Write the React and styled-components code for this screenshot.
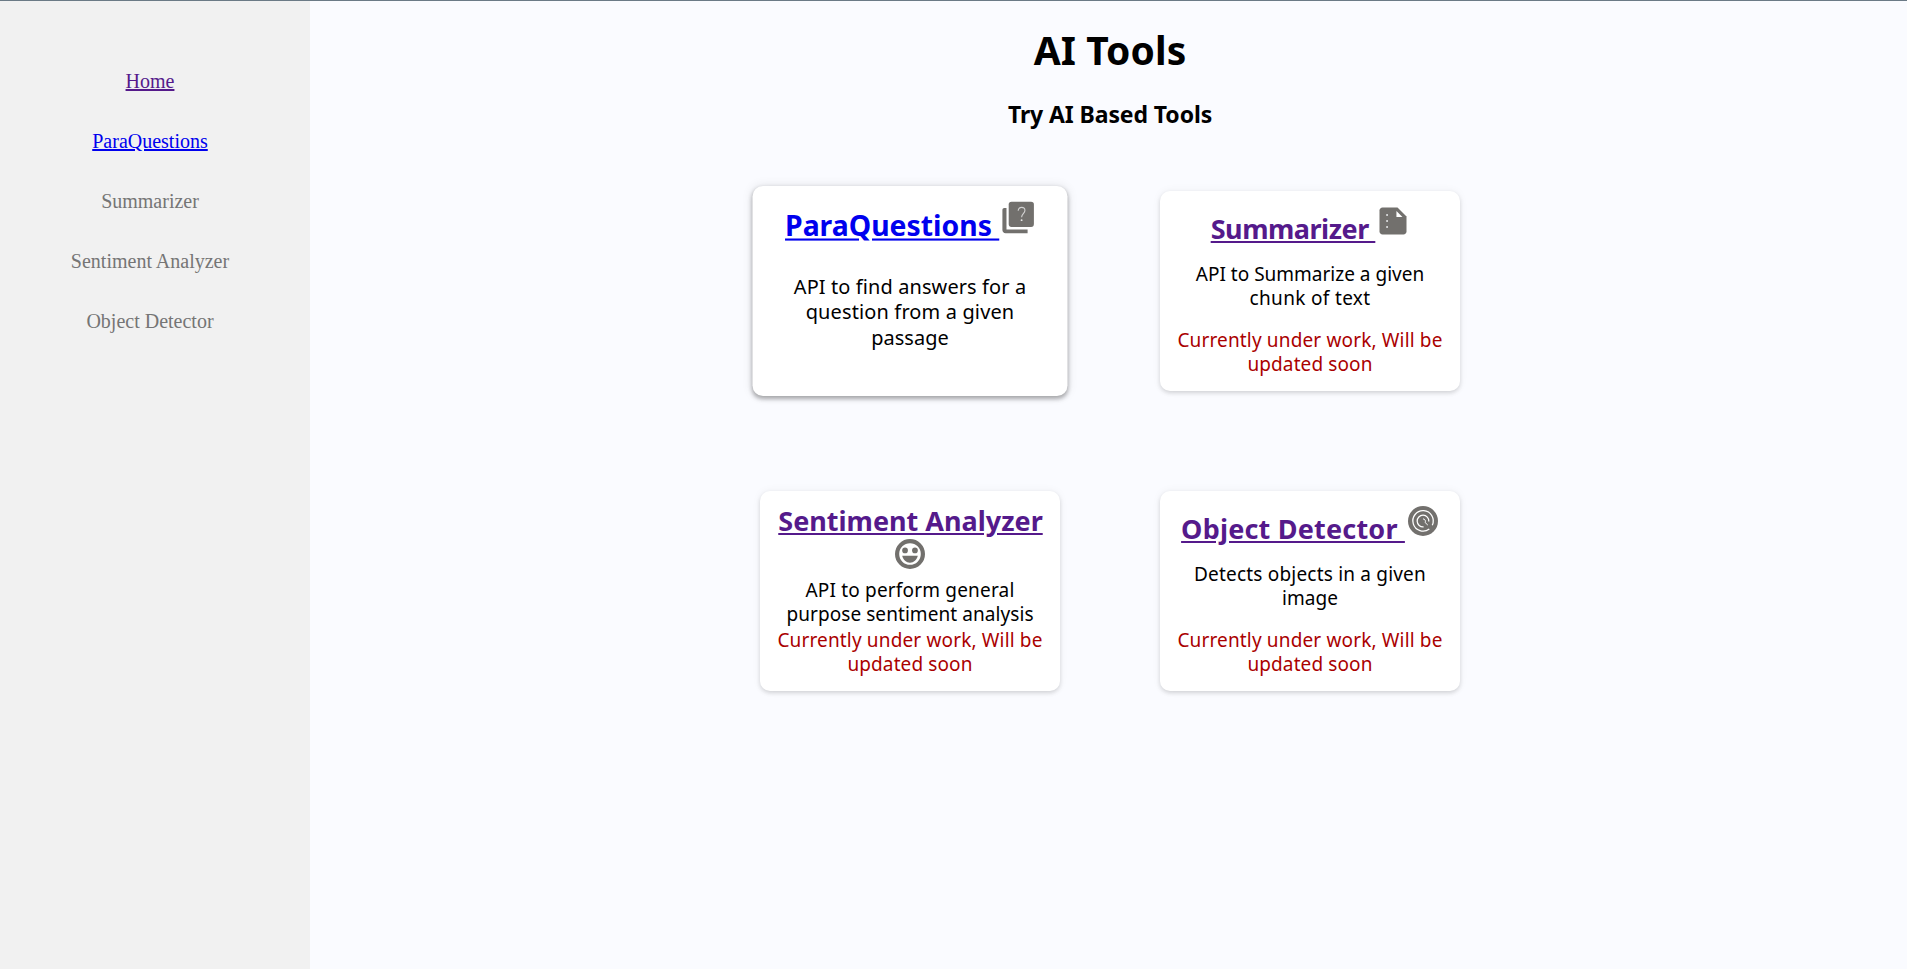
import React from "react";
import styled, { createGlobalStyle } from "styled-components";

const GlobalStyle = createGlobalStyle`
  * {
    box-sizing: border-box;
  }

  body {
    margin: 0;
    background: #fafbff;
    overflow: hidden;
  }
`;

const Page = styled.div`
  display: flex;
  height: 100vh;
  border-top: 1px solid #6b7a86;
`;

const Sidebar = styled.nav`
  flex: none;
  width: 310px;
  padding: 50px 10px 0 0;
  background: #f1f1f1;
  display: flex;
  flex-direction: column;
  align-items: center;
  font-family: "Liberation Serif", "Times New Roman", serif;
  font-size: 20px;
`;

const NavItem = styled.div`
  height: 60px;
  line-height: 60px;
  color: #757575;
`;

const Link = styled.a`
  color: ${({ $visited }) => ($visited ? "#551a8b" : "#0000ee")};
  text-decoration: underline;
  letter-spacing: ${({ $tracking = 0 }) => $tracking}px;
  white-space: pre;
`;

const Main = styled.main`
  flex: 1;
  padding: 26px 0 0 3px;
  display: flex;
  flex-direction: column;
  align-items: center;
  background: #fafbff;
  font-family: "Noto Sans", "Open Sans", sans-serif;
  color: #000;
`;

const Heading = styled.h1`
  margin: 0;
  font-size: 39px;
  line-height: 46px;
  letter-spacing: 0.08px;
`;

const Subheading = styled.h2`
  margin: 27px 0 63px;
  font-size: 23px;
  line-height: 28px;
  letter-spacing: -0.1px;
`;

const CardGrid = styled.section`
  display: grid;
  grid-template-columns: repeat(2, 300px);
  grid-auto-rows: 200px;
  gap: 100px;
`;

const Card = styled.article`
  display: flex;
  flex-direction: column;
  align-items: center;
  padding: 12px 10px 15px;
  border-radius: 10px;
  background: #fff;
  text-align: center;
  transform: ${({ $raised }) => ($raised ? "scale(1.05)" : "none")};
  box-shadow: ${({ $raised }) =>
    $raised
      ? "0 0 10px rgba(0, 0, 0, 0.1), 0 2px 4px rgba(0, 0, 0, 0.3)"
      : "0 0 10px rgba(0, 0, 0, 0.05), 0 2px 4px rgba(0, 0, 0, 0.14)"};
`;

const CardTitle = styled.h3`
  margin: ${({ $stacked }) => ($stacked ? "2px 0 0" : "0")};
  padding-left: ${({ $stacked }) => ($stacked ? "1px" : "2px")};
  font-size: 27px;
  line-height: 32px;
  font-weight: 700;
  text-underline-offset: 2px;
  text-decoration-thickness: 2px;
`;

const Icon = styled.svg`
  display: ${({ $block }) => ($block ? "block" : "inline")};
  width: 36px;
  height: 36px;
  margin: ${({ $block }) => ($block ? "-1px auto 0" : "0")};
  vertical-align: baseline;
  fill: #72706d;
`;

const Description = styled.p`
  margin: ${({ $gap }) => $gap}px 0 0;
  font-size: 19px;
  line-height: 24px;
`;

const Notice = styled.p`
  margin: auto 0 0;
  font-size: 19px;
  line-height: 24px;
  color: #aa0000;
`;

const Line = styled.span`
  display: block;
  white-space: nowrap;
  letter-spacing: ${({ $tracking }) => $tracking}px;
`;

const QuestionsIcon = () => (
  <Icon viewBox="0 0 24 24">
    <path d="M4.6 6H3.2C2.5 6 2 6.500 2 7.200V20c0 1.100.9 2 2 2h14v-2.400H4.600z" />
    <rect x="6" y="2" width="16" height="16" rx="1.8" />
    <path
      d="M12 7.7c.2-1.4 1-2.1 2.2-2.1 1.3 0 2.1.8 2.1 1.9 0 1.900-2.100 2.300-2.100 4.300"
      fill="none"
      stroke="#d2d2d2"
      strokeWidth="0.7"
    />
    <circle cx="14.2" cy="13.7" r="0.6" fill="#e8e8e8" />
  </Icon>
);

const SummaryIcon = () => (
  <Icon viewBox="0 0 24 24">
    <path d="M15 3H5c-1.1 0-2 .9-2 2v14c0 1.1.9 2 2 2h14c1.1 0 2-.9 2-2V9z" />
    <path d="M14.3 5.4v4h4z" fill="#fff" />
    <g fill="#e6e8e9">
      <rect x="7.5" y="7.4" width="1.1" height="1.2" />
      <rect x="7.5" y="11.4" width="1.1" height="1.2" />
      <rect x="7.5" y="15.4" width="1.1" height="1.2" />
    </g>
  </Icon>
);

const SmileIcon = () => (
  <Icon $block viewBox="0 0 24 24">
    <circle cx="12" cy="12" r="8.6" fill="none" stroke="#72706d" strokeWidth="2.8" />
    <circle cx="8.7" cy="9.6" r="1.9" />
    <circle cx="15.3" cy="9.6" r="1.9" />
    <path d="M6.8 13.2h10.4c-.6 2.7-2.7 4.6-5.2 4.6s-4.6-1.9-5.2-4.6z" />
  </Icon>
);

const TargetIcon = () => (
  <Icon viewBox="0 0 24 24">
    <circle cx="12" cy="12" r="10" />
    <g fill="none" stroke="#fff" strokeWidth="0.85">
      <path d="M16.2 17.3A6.8 6.8 0 1 1 18.2 14.8" />
      <path d="M12.4 15.9A3.9 3.9 0 1 1 15.9 12.3" />
      <path d="M12 10.6a1.6 1.6 0 0 1 1.4 2.4l1.8 1.7" strokeWidth="0.65" />
    </g>
  </Icon>
);

const UnderWork = () => (
  <Notice>
    <Line $tracking={0.15}>Currently under work, Will be</Line>
    <Line $tracking={0.113}>updated soon</Line>
  </Notice>
);

export default function App() {
  return (
    <>
      <GlobalStyle />
      <Page>
        <Sidebar>
          <NavItem>
            <Link $visited href="#home">Home</Link>
          </NavItem>
          <NavItem>
            <Link href="#paraquestions">ParaQuestions</Link>
          </NavItem>
          <NavItem>Summarizer</NavItem>
          <NavItem>Sentiment Analyzer</NavItem>
          <NavItem>Object Detector</NavItem>
        </Sidebar>
        <Main>
          <Heading>AI Tools</Heading>
          <Subheading>Try AI Based Tools</Subheading>
          <CardGrid>
            <Card $raised>
              <CardTitle>
                <Link href="#paraquestions">{"ParaQuestions "}</Link>
                <QuestionsIcon />
              </CardTitle>
              <Description $gap={30}>
                <Line $tracking={0.109}>API to find answers for a</Line>
                <Line $tracking={0.143}>question from a given</Line>
                <Line $tracking={0.018}>passage</Line>
              </Description>
            </Card>
            <Card>
              <CardTitle>
                <Link $visited $tracking={-0.48} href="#summarizer">{"Summarizer "}</Link>
                <SummaryIcon />
              </CardTitle>
              <Description $gap={17}>
                <Line $tracking={0}>API to Summarize a given</Line>
                <Line $tracking={0.338}>chunk of text</Line>
              </Description>
              <UnderWork />
            </Card>
            <Card>
              <CardTitle $stacked>
                <Link $visited href="#sentiment">Sentiment Analyzer</Link>
                <SmileIcon />
              </CardTitle>
              <Description $gap={6}>
                <Line $tracking={0.184}>API to perform general</Line>
                <Line $tracking={0.072}>purpose sentiment analysis</Line>
              </Description>
              <UnderWork />
            </Card>
            <Card>
              <CardTitle>
                <Link $visited $tracking={0.2} href="#detector">{"Object Detector "}</Link>
                <TargetIcon />
              </CardTitle>
              <Description $gap={17}>
                <Line $tracking={0.194}>Detects objects in a given</Line>
                <Line $tracking={0.072}>image</Line>
              </Description>
              <UnderWork />
            </Card>
          </CardGrid>
        </Main>
      </Page>
    </>
  );
}
